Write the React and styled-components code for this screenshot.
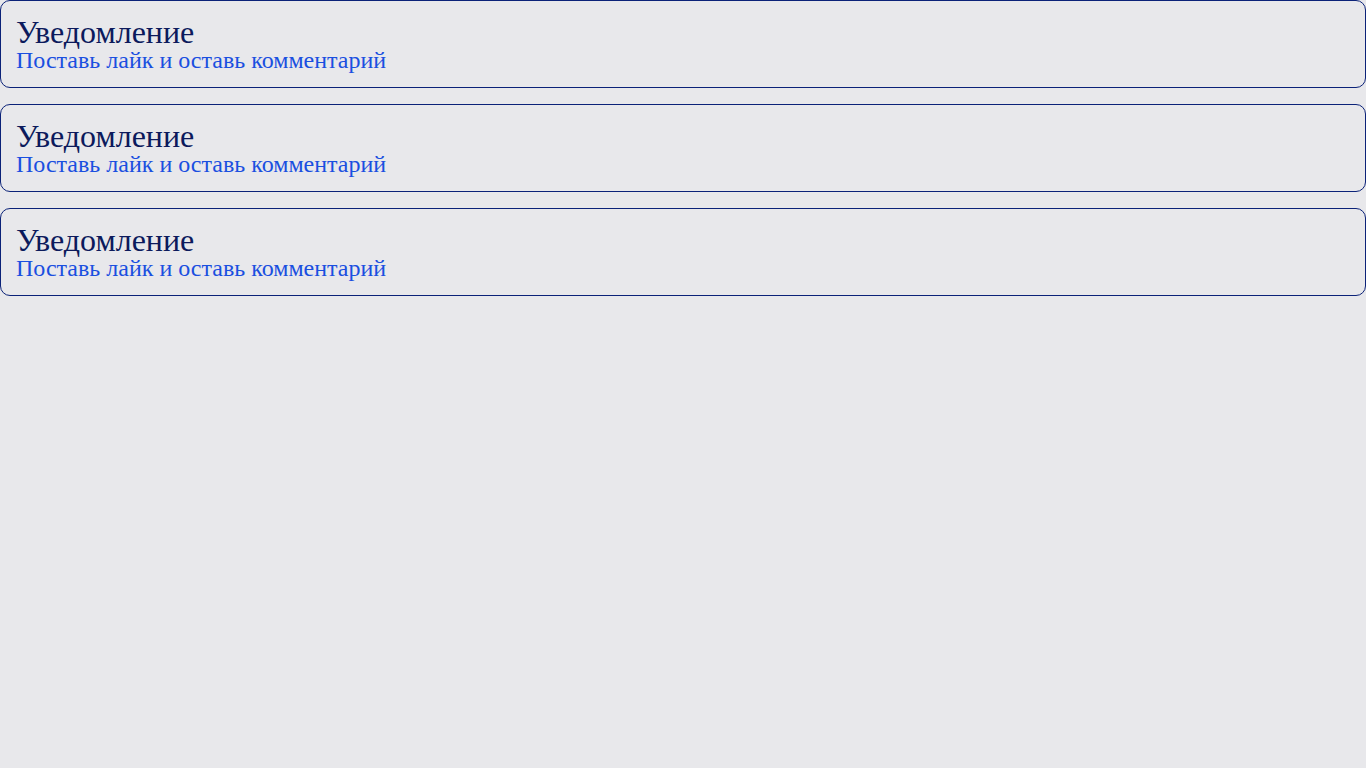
import React from "react";
import styled, { createGlobalStyle } from "styled-components";

const GlobalStyle = createGlobalStyle`
  html, body {
    margin: 0;
    padding: 0;
    background: #e8e8eb;
    font-family: "Liberation Serif", "Times New Roman", serif;
  }
`;

const List = styled.div`
  display: flex;
  flex-direction: column;
  gap: 16px;
`;

const Card = styled.div`
  border: 1px solid #0b2278;
  border-radius: 10px;
  padding: 15px;
  display: flex;
  flex-direction: column;
`;

const Title = styled.div`
  font-size: 32px;
  line-height: 1;
  color: #0c1a5c;
`;

const Text = styled.div`
  font-size: 24px;
  line-height: 1;
  color: #1a4fe0;
`;

const notes = [1, 2, 3];

function App() {
  return (
    <>
      <GlobalStyle />
      <List>
        {notes.map((n) => (
          <Card key={n}>
            <Title>Уведомление</Title>
            <Text>Поставь лайк и оставь комментарий</Text>
          </Card>
        ))}
      </List>
    </>
  );
}

export default App;
